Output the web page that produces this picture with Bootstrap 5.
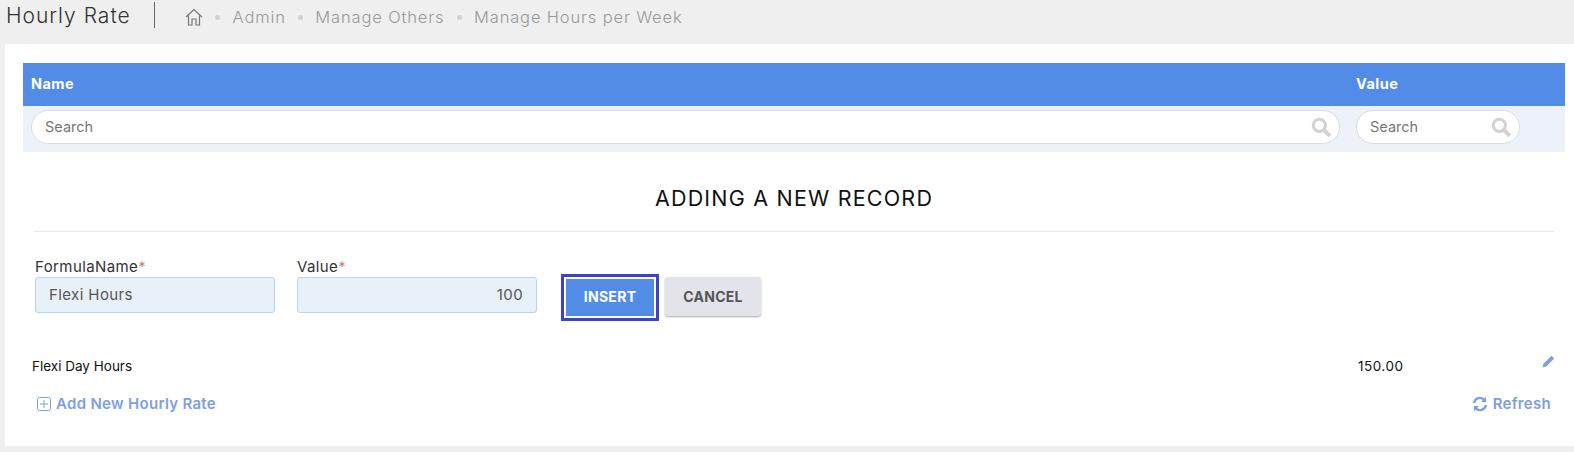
<!DOCTYPE html>
<html lang="en">
<head>
    <meta charset="UTF-8">
    <meta name="viewport" content="width=device-width, initial-scale=1.0">
    <title>Hourly Rate</title>
    <link href="https://cdn.jsdelivr.net/npm/bootstrap@5.3.0/dist/css/bootstrap.min.css" rel="stylesheet">
    <style>
        body { background: #efefef; font-family: Inter, "Open Sans", sans-serif; font-size: 14px; color: #111; height: 452px; overflow: hidden; }
        .top-bar { height: 44px; padding: 2px 0 0 6px; }
        .page-name { font-size: 21px; font-weight: 300; color: #333; width: 149px; height: 26px; line-height: 28px; border-right: 1px solid #666; letter-spacing: 1px; }
        .crumbs { margin-left: 30px; margin-bottom: 12px; color: #999; font-size: 16.5px; font-weight: 300; letter-spacing: .85px; gap: 12.300px; }
        .crumb-dot { width: 5px; height: 5px; border-radius: 50%; background: #d2d2d2; }
        .panel-main { background: #fff; margin-left: 5px; height: 402px; padding: 19px 9px 0 18px; }
        .grid-head { background: #538ce6; color: #fff; font-weight: 700; height: 43px; font-size: 14.5px; letter-spacing: .45px; padding-bottom: 2px; }
        .grid-filter { background: #edf2fa; height: 46px; padding-top: 4px; }
        .col-name { width: 1326px; padding-left: 8px; padding-right: 8px; }
        .col-value { padding-left: 7px; }
        .search-box { height: 34px; background: #fff; border: 1px solid #ddd; border-radius: 17px; padding: 0 8px 1px 13px; color: #777; font-size: 14.5px; }
        .search-wide { width: 1309px; }
        .search-small { width: 164px; }
        .new-title { font-size: 21.5px; font-weight: 400; color: #111; text-align: center; padding: 32px 0 0; height: 79px; line-height: 28px; letter-spacing: 1.2px; }
        .form-rule { border-top: 1px solid #e9e9e9; margin: 0 11px; }
        .form-area { padding: 26px 12px 0; height: 120px; }
        .field-box { width: 240px; margin-right: 22px; }
        .field-label { font-size: 15px; line-height: 18px; margin-bottom: 1px; color: #333; letter-spacing: .4px; }
        .field-label span { color: #c46a6a; font-weight: 300; }
        .field-input { height: 36px; width: 240px; background: #e8f0fa; border: 1px solid #b9d3f0; border-radius: 3px; color: #555; font-family: inherit; font-size: 15px; padding: 0 13px 2px; letter-spacing: .4px; }
        .btn-wrap { margin: 16px 0 0 2px; gap: 6px; }
        .btn-insert { width: 98px; height: 47px; background: #538ce6; color: #fff; border: 3px solid #3c43c8; outline: 2px solid #fff; outline-offset: -5px; border-radius: 0; font-size: 14px; font-weight: 700; letter-spacing: .3px; padding-bottom: 4px; }
        .btn-cancel { width: 96px; height: 39px; margin-top: 3px; background: #e2e4ea; color: #555; border: 0; border-radius: 3px; box-shadow: 0 1px 2px #aaa; font-size: 14px; font-weight: 700; letter-spacing: .3px; }
        .data-row { height: 26px; line-height: 26px; font-size: 13.5px; padding-top: 1px; }
        .data-row .col-name { padding-left: 9px; }
        .data-row .col-value { padding-left: 9px; letter-spacing: .5px; }
        .pencil { margin-left: 139px; margin-top: 2px; }
        .bottom-links { color: #7d9fe0; font-weight: 600; font-size: 15px; letter-spacing: .3px; padding: 15px 14px 0 14px; }
        .bottom-links svg { margin-right: 5px; }
    </style>
</head>
<body>

<!-- Cabecalho -->
<div class="top-bar d-flex">
    <div class="page-name">Hourly Rate</div>
    <div class="crumbs d-flex align-items-center">
        <svg width="18" height="18" viewBox="0 0 18 18" fill="none" stroke="#777" stroke-width="1.2"><path d="M1 9 9 1.5 17 9M3.5 7.5V17H7v-6h4v6h3.500V7.500"/></svg>
        <span class="crumb-dot"></span><span>Admin</span>
        <span class="crumb-dot"></span><span>Manage Others</span>
        <span class="crumb-dot"></span><span>Manage Hours per Week</span>
    </div>
</div>

<div class="panel-main">
    <!-- Grid -->
    <div class="grid-head d-flex align-items-center">
        <div class="col-name">Name</div>
        <div class="col-value">Value</div>
    </div>
    <div class="grid-filter d-flex">
        <div class="col-name">
            <div class="search-box search-wide d-flex align-items-center justify-content-between">Search
                <svg width="20" height="20" viewBox="0 0 18 18" fill="none" stroke="#d2d2d2"><circle cx="7.500" cy="7.500" r="5.500" stroke-width="2.800"/><path d="m12 12 5 5" stroke-width="3.600"/></svg>
            </div>
        </div>
        <div class="col-value">
            <div class="search-box search-small d-flex align-items-center justify-content-between">Search
                <svg width="20" height="20" viewBox="0 0 18 18" fill="none" stroke="#d2d2d2"><circle cx="7.500" cy="7.500" r="5.500" stroke-width="2.800"/><path d="m12 12 5 5" stroke-width="3.600"/></svg>
            </div>
        </div>
    </div>

    <!-- Formulario -->
    <div class="new-title">ADDING A NEW RECORD</div>
    <div class="form-rule"></div>
    <form class="form-area d-flex">
        <div class="field-box">
            <div class="field-label">FormulaName<span>*</span></div>
            <input type="text" class="field-input" value="Flexi Hours">
        </div>
        <div class="field-box">
            <div class="field-label">Value<span>*</span></div>
            <input type="text" class="field-input text-end" value="100">
        </div>
        <div class="btn-wrap d-flex align-items-start">
            <button type="button" class="btn-insert">INSERT</button>
            <button type="button" class="btn-cancel">CANCEL</button>
        </div>
    </form>

    <!-- Registros -->
    <div class="data-row d-flex">
        <div class="col-name">Flexi Day Hours</div>
        <div class="col-value">150.00</div>
        <svg class="pencil" width="13" height="13" viewBox="0 0 13 13" fill="#7d9fe0"><path d="M9.500.800 12.200 3.500 4.200 11.500.500 12.500 1.500 8.800Z"/></svg>
    </div>
    <div class="bottom-links d-flex justify-content-between">
        <div class="d-flex align-items-center">
            <svg width="14" height="14" viewBox="0 0 14 14" fill="none" stroke="#7d9fe0"><rect x=".5" y=".5" width="13" height="13" rx="2"/><path d="M7 3v8M3 7h8"/></svg>
            Add New Hourly Rate
        </div>
        <div class="d-flex align-items-center">
            <svg width="16" height="16" viewBox="0 0 16 16" fill="none" stroke="#7d9fe0" stroke-width="2.200"><path d="M2 7a6 6 0 0 1 10.500-3M14 9a6 6 0 0 1-10.500 3"/><path d="M14 .8V6H9M2 15.200V10h5" fill="#7d9fe0" stroke="none"/></svg>
            Refresh
        </div>
    </div>
</div>

<script src="https://cdn.jsdelivr.net/npm/bootstrap@5.3.0/dist/js/bootstrap.bundle.min.js"></script>
</body>
</html>
